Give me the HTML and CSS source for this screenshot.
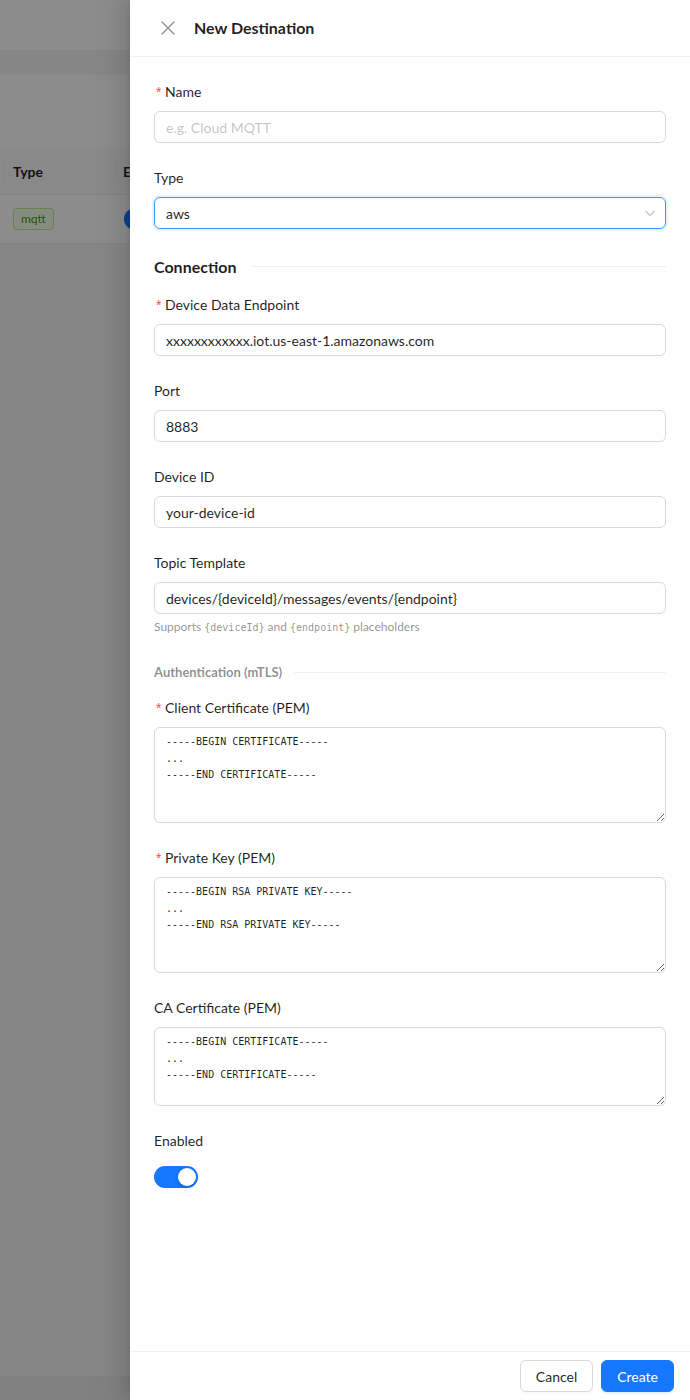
FILE: index.html
```html
<!DOCTYPE html>
<html lang="en">
<head>
<meta charset="utf-8">
<title>Destinations</title>
<link rel="stylesheet" href="styles.css">
</head>
<body>
<div class="page">
  <div class="topbar"></div>
  <div class="strip"></div>
  <div class="toolbar"></div>
  <div class="table">
    <div class="thead">
      <div class="th th-first"></div>
      <div class="th th-type">Type</div>
      <div class="th th-enabled"><span class="clip">Enabled</span></div>
    </div>
    <div class="trow">
      <div class="td td-first"></div>
      <div class="td td-type"><span class="tag">mqtt</span></div>
      <div class="td td-enabled"><span class="mini-switch"></span></div>
    </div>
  </div>
  <div class="page-foot"></div>
</div>

<div class="mask"></div>

<aside class="drawer">
  <header class="drawer-header">
    <button class="close" type="button" aria-label="Close">
      <svg width="14" height="14" viewBox="0 0 14 14"><path d="M1 1 L13 13 M13 1 L1 13" stroke="currentColor" stroke-width="1.3" fill="none" stroke-linecap="round"/></svg>
    </button>
    <h1 class="drawer-title">New Destination</h1>
  </header>

  <div class="drawer-body">
    <form class="form">
      <div class="item">
        <label class="label"><span class="req">*</span>Name</label>
        <input class="input" type="text" placeholder="e.g. Cloud MQTT">
      </div>

      <div class="item">
        <label class="label">Type</label>
        <div class="select">
          <span class="select-value">aws</span>
          <svg class="select-arrow" width="12" height="12" viewBox="0 0 12 12"><path d="M1.5 4 L6 8.5 L10.5 4" stroke="currentColor" stroke-width="1.1" fill="none"/></svg>
        </div>
      </div>

      <div class="divider divider-main"><span class="divider-text">Connection</span><span class="divider-line"></span></div>

      <div class="item">
        <label class="label"><span class="req">*</span>Device Data Endpoint</label>
        <input class="input" type="text" value="xxxxxxxxxxxx.iot.us-east-1.amazonaws.com">
      </div>

      <div class="item">
        <label class="label">Port</label>
        <input class="input" type="text" value="8883">
      </div>

      <div class="item">
        <label class="label">Device ID</label>
        <input class="input" type="text" value="your-device-id">
      </div>

      <div class="item">
        <label class="label">Topic Template</label>
        <input class="input" type="text" value="devices/{deviceId}/messages/events/{endpoint}">
        <div class="extra">Supports <code>{deviceId}</code> and <code>{endpoint}</code> placeholders</div>
      </div>

      <div class="divider divider-sub"><span class="divider-text">Authentication (mTLS)</span><span class="divider-line"></span></div>

      <div class="item">
        <label class="label"><span class="req">*</span>Client Certificate (PEM)</label>
        <textarea class="textarea tall">-----BEGIN CERTIFICATE-----
...
-----END CERTIFICATE-----</textarea>
      </div>

      <div class="item">
        <label class="label"><span class="req">*</span>Private Key (PEM)</label>
        <textarea class="textarea tall">-----BEGIN RSA PRIVATE KEY-----
...
-----END RSA PRIVATE KEY-----</textarea>
      </div>

      <div class="item">
        <label class="label">CA Certificate (PEM)</label>
        <textarea class="textarea short">-----BEGIN CERTIFICATE-----
...
-----END CERTIFICATE-----</textarea>
      </div>

      <div class="item">
        <label class="label">Enabled</label>
        <span class="switch"><span class="knob"></span></span>
      </div>
    </form>
  </div>

  <footer class="drawer-footer">
    <button class="btn" type="button">Cancel</button>
    <button class="btn btn-primary" type="button">Create</button>
  </footer>
</aside>
</body>
</html>
```

FILE: styles.css
```css
* {
  box-sizing: border-box;
}

html, body {
  margin: 0;
  padding: 0;
}

body {
  position: relative;
  width: 690px;
  height: 1400px;
  overflow: hidden;
  font-family: "Segoe UI", Lato, "Noto Sans", sans-serif;
  font-size: 14px;
  color: rgba(0, 0, 0, 0.88);
  background: #f5f5f5;
}

/* ---------- page behind the drawer ---------- */
.page {
  height: 1400px;
  display: flex;
  flex-direction: column;
}

.topbar {
  height: 50px;
  background: #ffffff;
}

.strip {
  height: 25px;
  background: #f5f5f5;
}

.toolbar {
  height: 73px;
  background: #ffffff;
}

.table {
  background: #ffffff;
}

.thead,
.trow {
  display: grid;
  grid-template-columns: 4px 111px 15px;
}

.thead {
  height: 47px;
  background: #fafafa;
  border-bottom: 1px solid #f0f0f0;
}

.th {
  position: relative;
  display: flex;
  align-items: center;
  padding-left: 9px;
  font-weight: 700;
  white-space: nowrap;
}

.th-first {
  padding: 0;
}

.th-type::before,
.th-enabled::before {
  content: "";
  position: absolute;
  left: 0;
  top: 12px;
  height: 22px;
  width: 1px;
  background: #f0f0f0;
}

.th-type::before {
  left: -1px;
}

.th-enabled,
.td-enabled {
  padding-left: 8px;
  overflow: hidden;
}

.clip {
  display: block;
  width: 7px;
  overflow: hidden;
}

.trow {
  height: 49px;
  border-bottom: 1px solid #f0f0f0;
}

.td {
  display: flex;
  align-items: center;
  padding-left: 9px;
}

.td-first {
  padding: 0;
}

.tag {
  display: inline-block;
  height: 22px;
  line-height: 20px;
  padding: 0 7px;
  font-size: 12px;
  color: #389e0d;
  background: #f6ffed;
  border: 1px solid #b7eb8f;
  border-radius: 4px;
}

.mini-switch {
  display: inline-block;
  flex: none;
  width: 44px;
  height: 22px;
  border-radius: 11px;
  background: #1677ff;
}

.page-foot {
  margin-top: auto;
  height: 24px;
  background: #ebebeb;
}

/* ---------- overlay ---------- */
.mask {
  position: absolute;
  inset: 0;
  background: rgba(0, 0, 0, 0.45);
}

.drawer {
  position: absolute;
  top: 0;
  right: 0;
  width: 560px;
  height: 1400px;
  display: flex;
  flex-direction: column;
  background: #ffffff;
  box-shadow: -6px 0 16px 0 rgba(0, 0, 0, 0.08),
              -3px 0 6px -4px rgba(0, 0, 0, 0.12),
              -9px 0 28px 8px rgba(0, 0, 0, 0.05);
}

.drawer-header {
  height: 57px;
  flex: none;
  display: flex;
  align-items: center;
  padding: 0 24px;
  border-bottom: 1px solid #f0f0f0;
}

.close {
  width: 28px;
  height: 28px;
  margin-right: 12px;
  padding: 0;
  border: 0;
  background: transparent;
  color: rgba(0, 0, 0, 0.45);
  display: flex;
  align-items: center;
  justify-content: center;
}

.drawer-title {
  margin: 0;
  font-size: 16px;
  font-weight: 700;
  line-height: 24px;
  color: rgba(0, 0, 0, 0.88);
}

.drawer-body {
  flex: 1;
  padding: 24px 24px;
  overflow: hidden;
}

.form {
  display: flex;
  flex-direction: column;
}

.item {
  display: flex;
  flex-direction: column;
  align-items: flex-start;
  margin-bottom: 24px;
}

.label {
  height: 30px;
  line-height: 22px;
  padding-bottom: 8px;
  font-size: 14px;
  color: rgba(0, 0, 0, 0.88);
}

.req {
  display: inline-block;
  width: 11px;
  padding-left: 2px;
  color: #ff4d4f;
  font-family: "Liberation Sans", sans-serif;
  font-size: 14px;
}

.input {
  width: 100%;
  height: 32px;
  padding: 4px 11px;
  font: inherit;
  font-size: 14px;
  color: rgba(0, 0, 0, 0.88);
  background: #ffffff;
  border: 1px solid #d9d9d9;
  border-radius: 6px;
  outline: none;
}

.input::placeholder {
  color: rgba(0, 0, 0, 0.25);
}

.select {
  width: 100%;
  height: 32px;
  padding: 0 11px;
  display: flex;
  align-items: center;
  justify-content: space-between;
  border: 1px solid #4096ff;
  border-radius: 6px;
  box-shadow: 0 0 0 2px rgba(5, 145, 255, 0.1);
}

.select-arrow {
  color: rgba(0, 0, 0, 0.25);
  margin-right: -2px;
}

.divider {
  display: flex;
  align-items: center;
  width: 100%;
}

.divider-main {
  margin: 1px 0 16px;
  height: 24px;
}

.divider-main .divider-text {
  font-size: 16px;
  font-weight: 700;
  padding-right: 16px;
  color: rgba(0, 0, 0, 0.88);
}

.divider-sub {
  margin: 2px 0 15px;
  height: 20px;
}

.divider-sub .divider-text {
  font-size: 13px;
  font-weight: 700;
  padding-right: 12px;
  color: rgba(0, 0, 0, 0.45);
}

.divider-line {
  flex: 1;
  height: 1px;
  background: rgba(5, 5, 5, 0.06);
}

.extra {
  height: 22px;
  line-height: 26px;
  font-size: 12px;
  color: rgba(0, 0, 0, 0.45);
}

.extra code {
  font-family: "DejaVu Sans Mono", monospace;
  font-size: 10px;
}

.textarea {
  display: block;
  width: 100%;
  padding: 6px 11px 4px;
  font-family: "DejaVu Sans Mono", "Liberation Mono", monospace;
  font-size: 10px;
  line-height: 16.5px;
  color: rgba(0, 0, 0, 0.88);
  background: #ffffff;
  border: 1px solid #d9d9d9;
  border-radius: 6px;
  outline: none;
}

.textarea.tall {
  height: 96px;
}

.textarea.short {
  height: 79px;
}

.switch {
  position: relative;
  display: inline-block;
  width: 44px;
  height: 22px;
  margin-top: 6px;
  border-radius: 11px;
  background: #1677ff;
}

.knob {
  position: absolute;
  top: 2px;
  right: 2px;
  width: 18px;
  height: 18px;
  border-radius: 50%;
  background: #ffffff;
  box-shadow: 0 2px 4px 0 rgba(0, 35, 11, 0.2);
}

.drawer-footer {
  flex: none;
  height: 49px;
  display: flex;
  justify-content: flex-end;
  align-items: center;
  gap: 8px;
  padding: 0 16px;
  border-top: 1px solid #f0f0f0;
}

.btn {
  height: 32px;
  padding: 0 15px;
  font: inherit;
  font-size: 14px;
  color: rgba(0, 0, 0, 0.88);
  background: #ffffff;
  border: 1px solid #d9d9d9;
  border-radius: 6px;
  box-shadow: 0 2px 0 rgba(0, 0, 0, 0.02);
}

.btn-primary {
  color: #ffffff;
  background: #1677ff;
  border-color: #1677ff;
  box-shadow: 0 2px 0 rgba(5, 145, 255, 0.1);
}
```
